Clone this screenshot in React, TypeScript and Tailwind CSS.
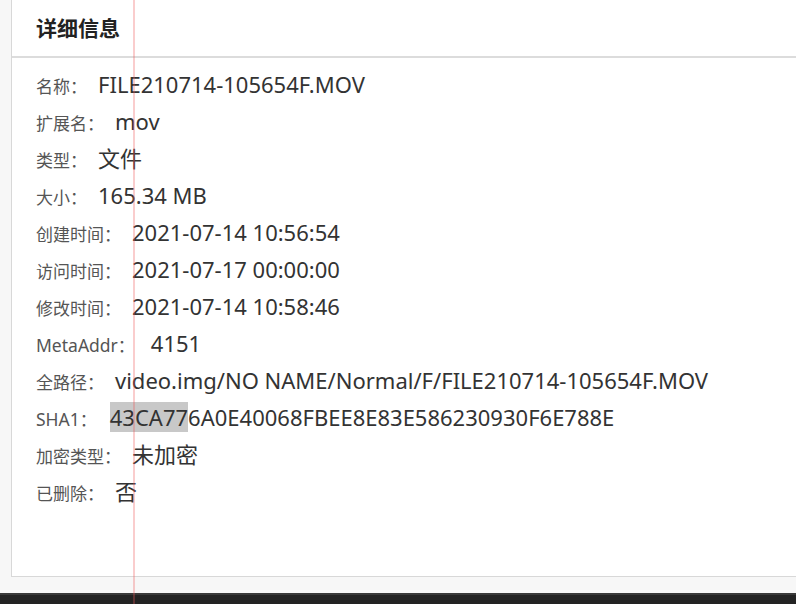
import { FC } from 'react';

const rows: { label: string; gap: string; latin?: boolean; value: string; hl?: string }[] = [
  { label: '名称', gap: 'ml-[11px]', value: 'FILE210714-105654F.MOV' },
  { label: '扩展名', gap: 'ml-[11px]', value: 'mov' },
  { label: '类型', gap: 'ml-[11px]', value: '文件' },
  { label: '大小', gap: 'ml-[11px]', value: '165.34 MB' },
  { label: '创建时间', gap: 'ml-[11px]', value: '2021-07-14 10:56:54' },
  { label: '访问时间', gap: 'ml-[11px]', value: '2021-07-17 00:00:00' },
  { label: '修改时间', gap: 'ml-[11px]', value: '2021-07-14 10:58:46' },
  { label: 'MetaAddr', gap: 'ml-[16px]', latin: true, value: '4151' },
  { label: '全路径', gap: 'ml-[11px]', value: 'video.img/NO NAME/Normal/F/FILE210714-105654F.MOV' },
  { label: 'SHA1', gap: 'ml-[13px]', latin: true, value: '6A0E40068FBEE8E83E586230930F6E788E', hl: '43CA77' },
  { label: '加密类型', gap: 'ml-[11px]', value: '未加密' },
  { label: '已删除', gap: 'ml-[11px]', value: '否' },
];

const InfoRow: FC<{ label: string; gap: string; latin?: boolean; value: string; hl?: string }> = ({
  label,
  gap,
  latin,
  value,
  hl,
}) => (
  <div className="flex items-baseline h-[37px]">
    <span className={latin ? 'text-[17.5px] text-[#555]' : 'text-[17px] text-[#555]'}>{label}</span>
    <span className="text-[17px] text-[#555]">：</span>
    <span className={`${gap} text-[22px] text-[#333]`}>
      {hl && <span className="bg-[#c8c8c8]">{hl}</span>}
      {value}
    </span>
  </div>
);

export default function App() {
  return (
    <div
      className="relative w-[796px] h-[604px] bg-[#f7f7f7] flex flex-col overflow-hidden"
      style={{ fontFamily: '"Noto Sans", "Noto Sans CJK SC", sans-serif' }}
    >
      <div className="flex-1 pl-[11px] pb-[16px]">
        <div className="h-full bg-white border-l border-b border-[#d8d8d8] flex flex-col">
          <div className="h-[58px] border-b-2 border-[#dcdcdc] flex items-center pl-[24px] pt-[2px]">
            <h2 className="text-[21px] font-bold text-[#222]">详细信息</h2>
          </div>
          <div className="pl-[24px] pt-[10px]">
            {rows.map((r) => (
              <InfoRow key={r.label} {...r} />
            ))}
          </div>
        </div>
      </div>
      <div className="h-[11px] bg-[#232323] border-t-2 border-[#3a3a3a]" />
      {/* guide line overlay */}
      <div className="absolute top-0 bottom-0 left-[133px] w-[2px] bg-[rgba(240,90,90,0.3)]" />
    </div>
  );
}
